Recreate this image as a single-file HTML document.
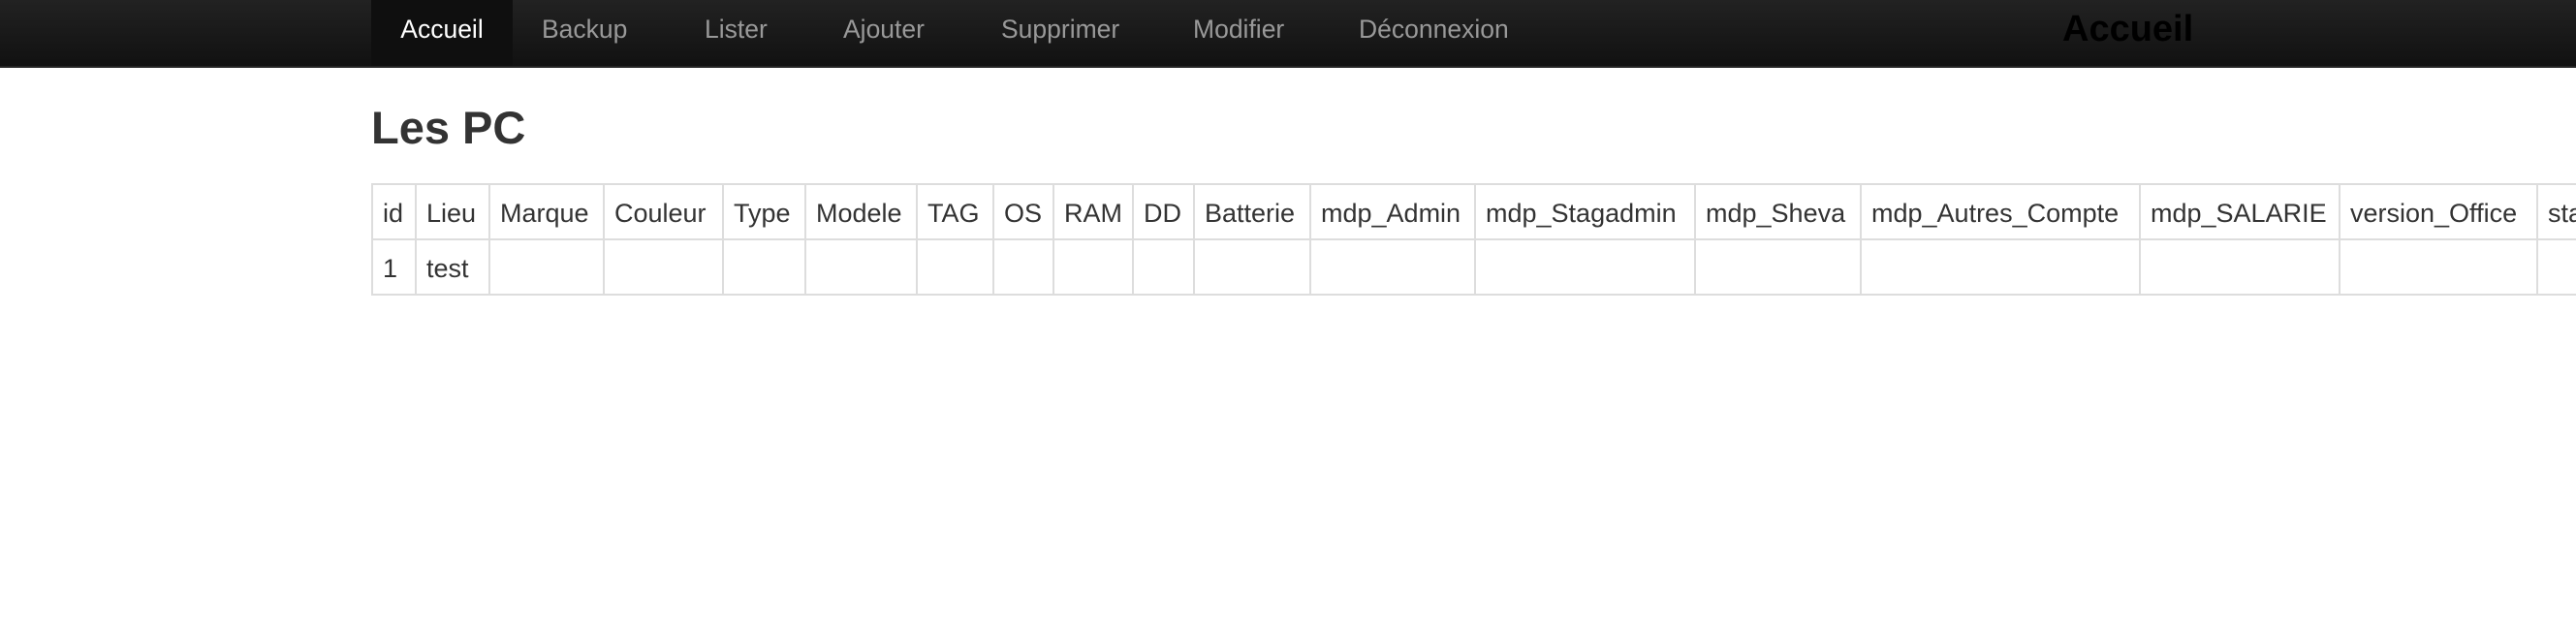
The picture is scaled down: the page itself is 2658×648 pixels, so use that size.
<!DOCTYPE html>
<html><head><meta charset="utf-8"><style>
html,body{margin:0;padding:0;width:2658px;height:648px;overflow:hidden;background:#fff;font-family:"Liberation Sans",Arial,sans-serif;color:#333}
.nav{position:absolute;left:0;top:0;width:2658px;height:68px;background:linear-gradient(#222,#111);border-bottom:2px solid #252525}
.nav a{position:absolute;top:0;height:68px;line-height:60px;font-size:26.5px;color:#999;text-decoration:none;white-space:nowrap}
.nav a.act{background:#0f0f0f;color:#fff;left:383px;width:146px;text-align:center}
.brand{position:absolute;left:2128px;top:4px;font-size:38px;font-weight:bold;color:#000;line-height:52px}
h2{position:absolute;left:383px;top:97px;margin:0;font-size:47px;font-weight:bold;line-height:70px;color:#333}
table{position:absolute;left:383px;top:189px;border-collapse:collapse;table-layout:fixed;width:2434px}
td{border:2px solid #ddd;font-size:27px;height:55px;padding:3px 0 0 10px;box-sizing:border-box;white-space:nowrap;overflow:hidden;color:#333}
tr{height:57px}
</style></head><body>
<div class="nav">
<a class="act">Accueil</a>
<a style="left:559px">Backup</a>
<a style="left:727px">Lister</a>
<a style="left:870px">Ajouter</a>
<a style="left:1033px">Supprimer</a>
<a style="left:1231px">Modifier</a>
<a style="left:1402px">Déconnexion</a>
<div class="brand">Accueil</div>
</div>
<h2>Les PC</h2>
<table>
<colgroup><col style="width:45px"><col style="width:76px"><col style="width:118px"><col style="width:123px"><col style="width:85px"><col style="width:115px"><col style="width:79px"><col style="width:62px"><col style="width:82px"><col style="width:63px"><col style="width:120px"><col style="width:170px"><col style="width:227px"><col style="width:171px"><col style="width:288px"><col style="width:206px"><col style="width:204px"><col style="width:200px"></colgroup>
<tr><td>id</td><td>Lieu</td><td>Marque</td><td>Couleur</td><td>Type</td><td>Modele</td><td>TAG</td><td>OS</td><td>RAM</td><td>DD</td><td>Batterie</td><td>mdp_Admin</td><td>mdp_Stagadmin</td><td>mdp_Sheva</td><td>mdp_Autres_Compte</td><td>mdp_SALARIE</td><td>version_Office</td><td>statut</td></tr>
<tr><td>1</td><td>test</td><td></td><td></td><td></td><td></td><td></td><td></td><td></td><td></td><td></td><td></td><td></td><td></td><td></td><td></td><td></td><td></td></tr>
</table>
</body></html>
